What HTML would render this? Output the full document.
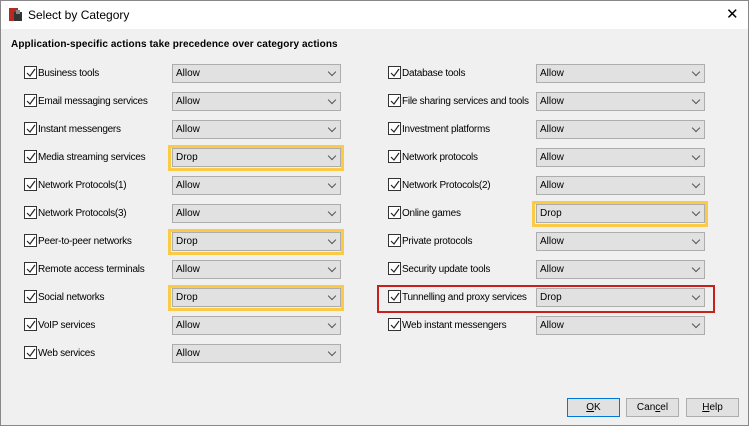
<!DOCTYPE html><html><head><style>
body{margin:0;width:749px;height:426px;overflow:hidden;font-family:"Liberation Sans",sans-serif;font-size:10px;color:#000}
.win{position:absolute;left:0;top:0;width:747px;height:424px;border:1px solid #888;background:#f0f0f0}
.tb{position:absolute;left:0;top:0;width:747px;height:28px;background:#fff}
.t{position:absolute;left:27px;top:7px;font-size:12px}
.x{position:absolute;left:725px;top:4px;font-size:15px}
.h{position:absolute;left:10px;top:38px;font-weight:bold;font-size:10px;letter-spacing:0.1px}
.cb{position:absolute;width:11px;height:11px;border:1px solid #333;background:#fff}
.cb svg{position:absolute;left:1px;top:1px}
.lb{position:absolute;letter-spacing:-0.25px}
.sel{position:absolute;width:167px;height:17px;border:1px solid #adadad;background:#e1e1e1}
.sel span{position:absolute;left:3px;top:3px}
.sel i{position:absolute;right:5px;top:4px;width:5px;height:5px;border-right:1px solid #555;border-bottom:1px solid #555;transform:rotate(45deg)}
.y{position:absolute;width:170px;height:20px;border:3px solid #fccb45}
.r{position:absolute;left:376px;top:284px;width:334px;height:24px;border:2px solid #c8201b}
.btn{position:absolute;top:397px;width:51px;height:17px;border:1px solid #adadad;background:#e1e1e1;text-align:center;line-height:17px}
</style></head><body><div class="win">
<div class="tb"><svg style="position:absolute;left:8px;top:7px" width="14" height="14"><rect x="0" y="0" width="9" height="13" fill="#b52a22"/><rect x="5" y="4" width="8" height="9" fill="#333"/><rect x="7" y="2" width="4" height="4" fill="#888"/></svg><div class="t">Select by Category</div><div class="x">✕</div></div>
<div class="h">Application-specific actions take precedence over category actions</div>
<div id="c"></div>
<div class="y" style="left:167px;top:144px"></div>
<div class="y" style="left:167px;top:228px"></div>
<div class="y" style="left:167px;top:284px"></div>
<div class="y" style="left:531px;top:200px"></div>
<div class="r"></div>
<div class="btn" style="left:566px;border-color:#0078d7"><u>O</u>K</div>
<div class="btn" style="left:625px">Can<u>c</u>el</div>
<div class="btn" style="left:685px"><u>H</u>elp</div>
</div>
<script>
var L=[["Business tools","Allow"],["Email messaging services","Allow"],["Instant messengers","Allow"],["Media streaming services","Drop"],["Network Protocols(1)","Allow"],["Network Protocols(3)","Allow"],["Peer-to-peer networks","Drop"],["Remote access terminals","Allow"],["Social networks","Drop"],["VoIP services","Allow"],["Web services","Allow"]];
var R=[["Database tools","Allow"],["File sharing services and tools","Allow"],["Investment platforms","Allow"],["Network protocols","Allow"],["Network Protocols(2)","Allow"],["Online games","Drop"],["Private protocols","Allow"],["Security update tools","Allow"],["Tunnelling and proxy services","Drop"],["Web instant messengers","Allow"]];
var h="";
function add(a,cx,lx,sx){a.forEach(function(e,i){var c=72+28*i;
h+='<div class="cb" style="left:'+cx+'px;top:'+(c-7)+'px"><svg width="10" height="10"><path d="M1 5 L4 8 L9 1" stroke="#222" fill="none" stroke-width="1.2"/></svg></div>';
h+='<div class="lb" style="left:'+lx+'px;top:'+(c-5)+'px">'+e[0]+'</div>';
h+='<div class="sel" style="left:'+sx+'px;top:'+(c-9)+'px"><span>'+e[1]+'</span><i></i></div>';});}
add(L,23,37,171);add(R,387,401,535);
document.getElementById("c").innerHTML=h;
</script></body></html>
